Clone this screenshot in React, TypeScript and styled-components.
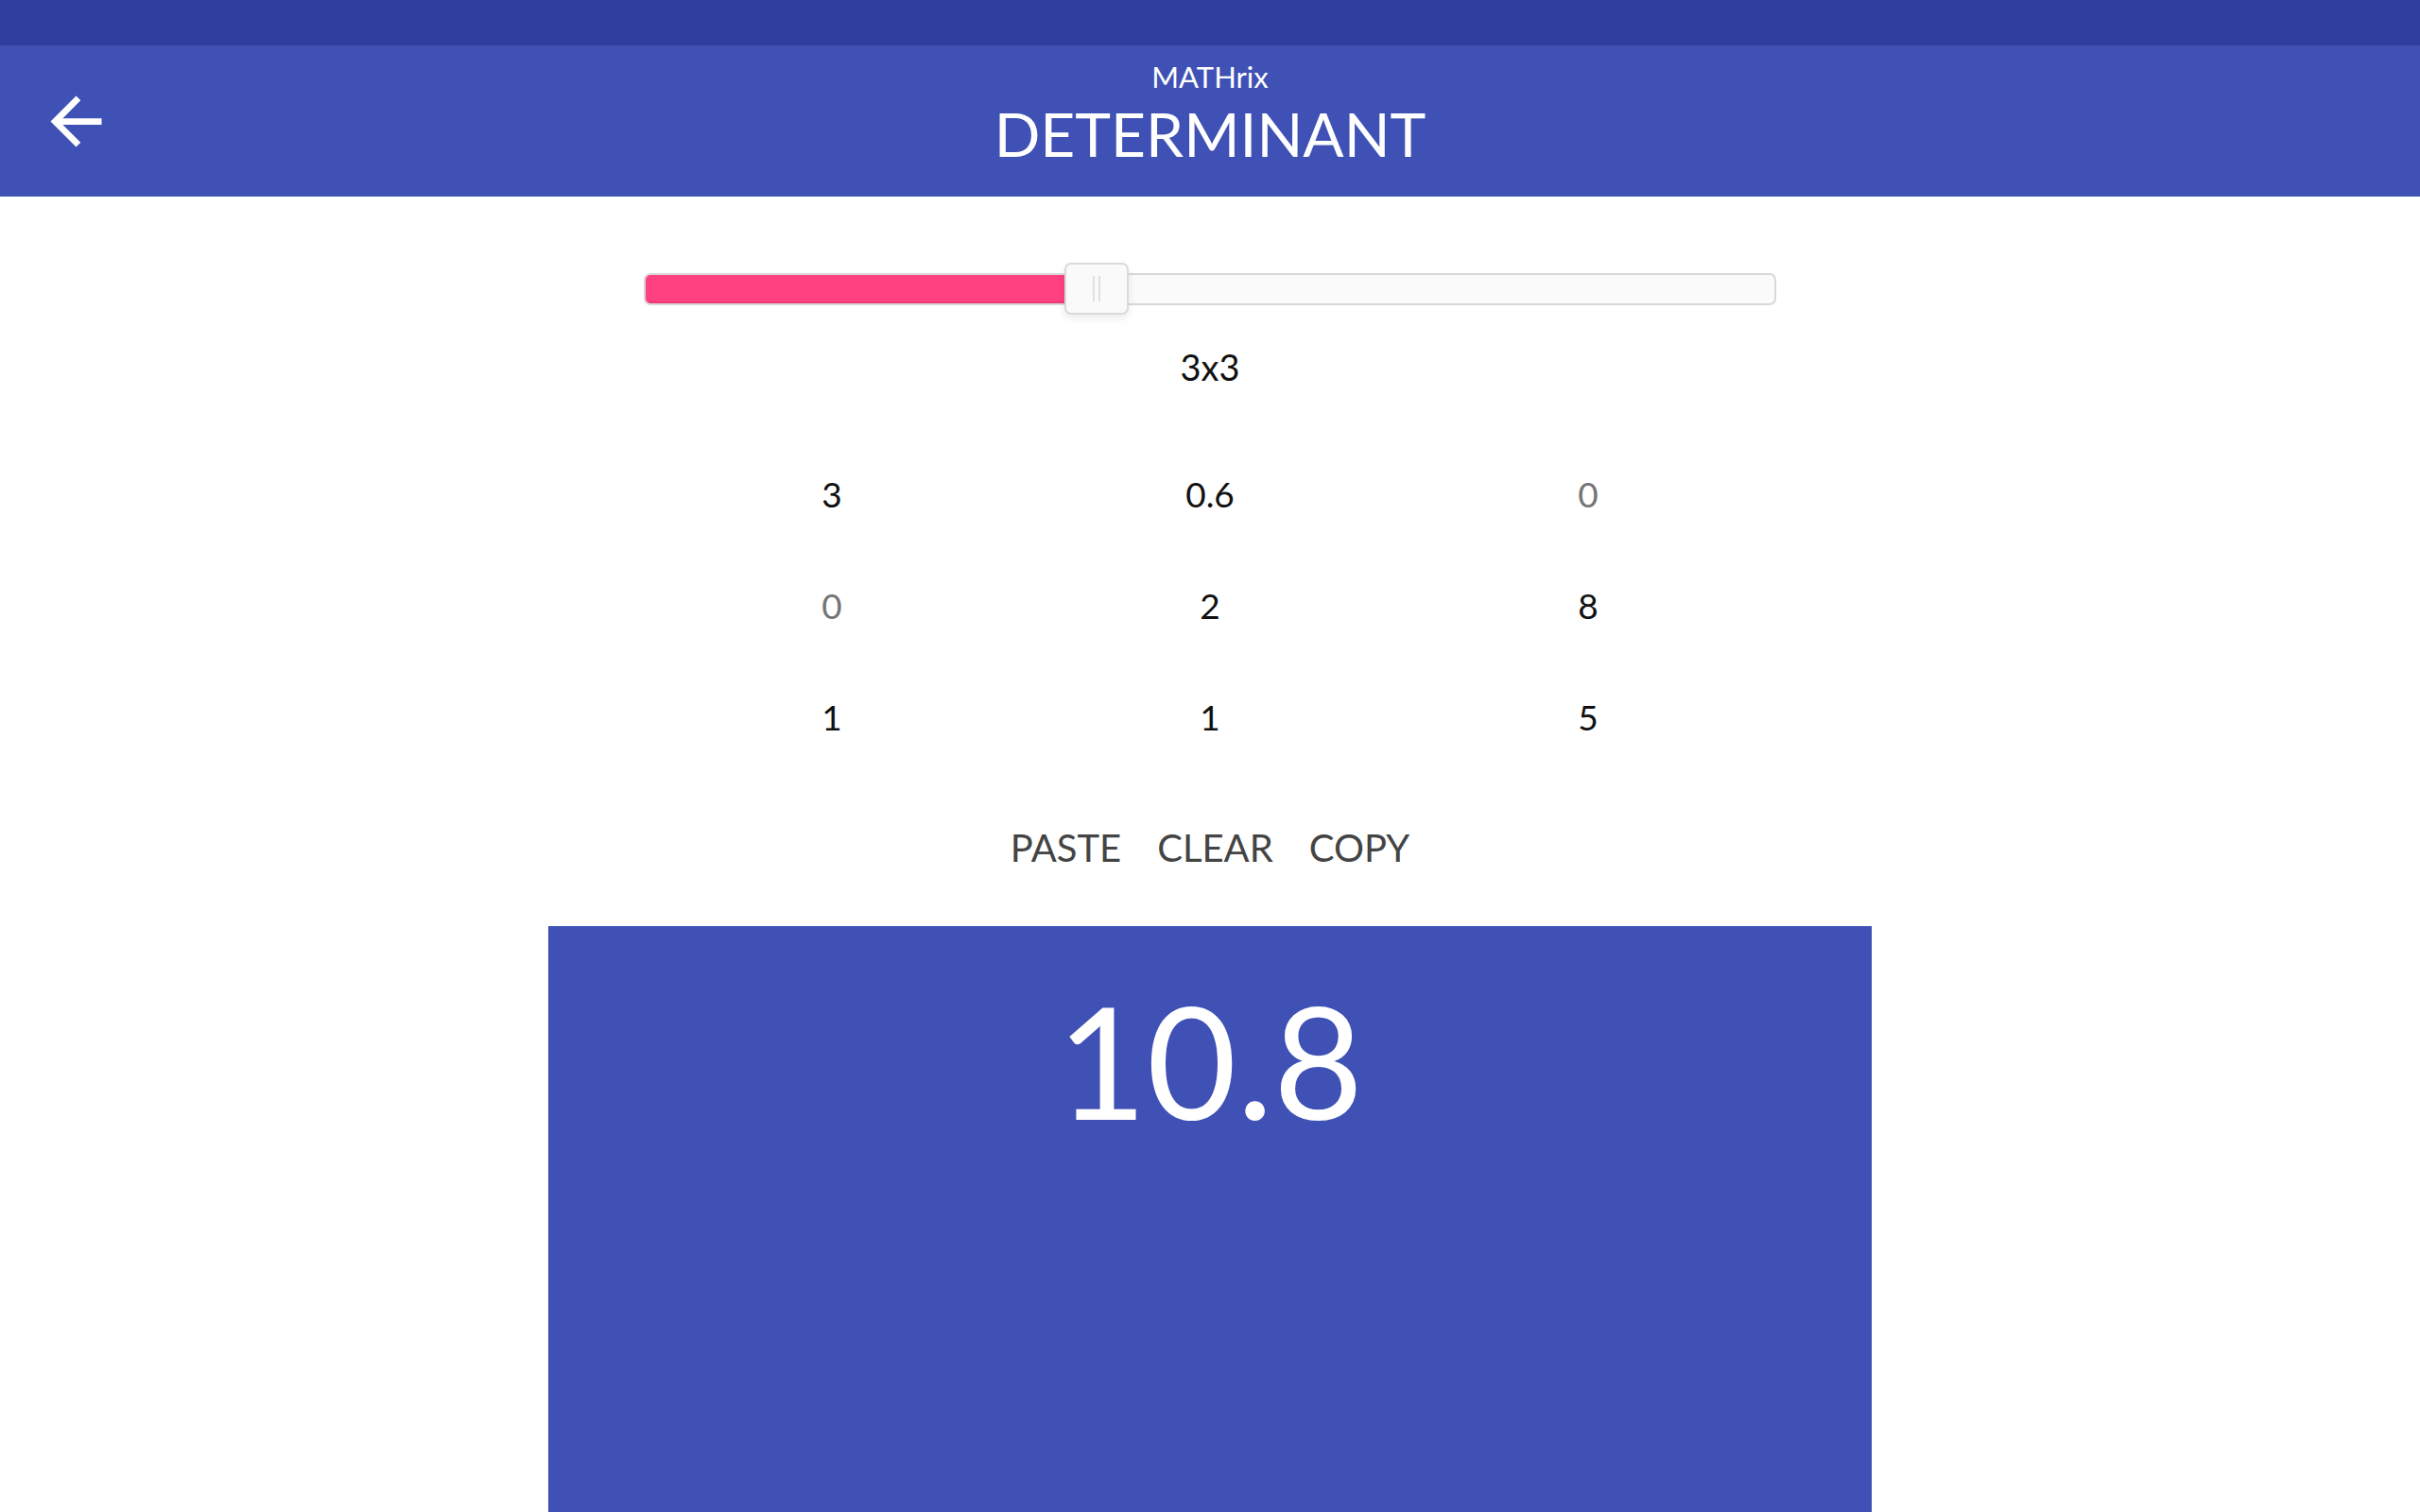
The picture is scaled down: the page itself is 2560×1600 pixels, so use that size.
import styled, { createGlobalStyle } from 'styled-components'
import { useState } from 'react'

const GlobalStyle = createGlobalStyle`
  html, body {
    margin: 0;
    padding: 0;
    background: #ffffff;
    font-family: Lato, "Open Sans", sans-serif;
  }
  * {
    box-sizing: border-box;
  }
`

const MIN_SIZE = 1
const MAX_SIZE = 6

const App = () => {
  const [size] = useState(3)
  const [cells] = useState<string[][]>([
    ['3', '0.6', ''],
    ['', '2', '8'],
    ['1', '1', '5'],
  ])

  const percent = ((size - MIN_SIZE) / (MAX_SIZE - MIN_SIZE)) * 100

  return (
    <Page>
      <GlobalStyle />
      <StatusBar />
      <AppBar>
        <BackButton aria-label='back'>
          <svg width='81' height='81' viewBox='0 0 24 24'>
            <path fill='#ffffff' d='M20 11H7.83l5.59-5.59L12 4l-8 8 8 8 1.41-1.41L7.83 13H20v-2z' />
          </svg>
        </BackButton>
        <Titles>
          <AppName>MATHrix</AppName>
          <ScreenTitle>DETERMINANT</ScreenTitle>
        </Titles>
        <span />
      </AppBar>

      <Content>
        <Slider>
          <Track>
            <Fill style={{ width: `${percent}%` }} />
          </Track>
          <Thumb style={{ left: `${percent}%` }}>
            <Grip />
            <Grip />
          </Thumb>
        </Slider>

        <SizeLabel>{size}x{size}</SizeLabel>

        <Matrix>
          {cells.map((row, r) =>
            row.map((value, c) => (
              <Cell key={`${r}-${c}`} defaultValue={value} placeholder='0' />
            ))
          )}
        </Matrix>

        <Actions>
          <TextButton>PASTE</TextButton>
          <TextButton>CLEAR</TextButton>
          <TextButton>COPY</TextButton>
        </Actions>

        <Result>
          <ResultValue>10.8</ResultValue>
        </Result>
      </Content>
    </Page>
  )
}

export default App

const Page = styled.div`
  display: flex;
  flex-direction: column;
  min-height: 100vh;
`

const StatusBar = styled.div`
  height: 48px;
  background: #303f9f;
`

const AppBar = styled.header`
  display: grid;
  grid-template-columns: 160px 1fr 160px;
  align-items: center;
  height: 160px;
  background: #3f51b5;
  color: #ffffff;
`

const BackButton = styled.button`
  display: flex;
  align-items: center;
  justify-content: center;
  height: 160px;
  padding: 0;
  border: none;
  background: transparent;
  cursor: pointer;
`

const Titles = styled.div`
  display: flex;
  flex-direction: column;
  align-items: center;
  align-self: start;
  padding-top: 18px;
`

const AppName = styled.div`
  font-size: 31px;
  line-height: 31px;
`

const ScreenTitle = styled.h1`
  margin: 13px 0 0;
  font-size: 64px;
  line-height: 64px;
  font-weight: 400;
`

const Content = styled.main`
  flex: 1;
  display: flex;
  flex-direction: column;
  align-items: center;
`

const Slider = styled.div`
  position: relative;
  display: flex;
  align-items: center;
  width: 1198px;
  height: 55px;
  margin-top: 70px;
`

const Track = styled.div`
  position: relative;
  width: 100%;
  height: 34px;
  border: 2px solid #d8d8d8;
  border-radius: 7px;
  background: #fafafa;
  overflow: hidden;
`

const Fill = styled.div`
  height: 100%;
  background: #ff4081;
  box-shadow: inset 0 -2px 0 rgba(0, 0, 0, 0.08);
`

const Thumb = styled.div`
  position: absolute;
  top: 0;
  width: 68px;
  height: 55px;
  margin-left: -34px;
  display: flex;
  justify-content: center;
  align-items: center;
  gap: 4px;
  background: #fafafa;
  border: 2px solid #dadada;
  border-radius: 7px;
  box-shadow: 0 4px 8px rgba(0, 0, 0, 0.08);
`

const Grip = styled.span`
  width: 2px;
  height: 27px;
  background: #e0e0e0;
`

const SizeLabel = styled.div`
  margin-top: 36px;
  font-size: 38px;
  line-height: 38px;
  color: #111111;
`

const Matrix = styled.div`
  display: grid;
  grid-template-columns: repeat(3, 400px);
  grid-auto-rows: 118px;
  margin-top: 56px;
`

const Cell = styled.input`
  width: 100%;
  height: 118px;
  padding: 0;
  border: none;
  outline: none;
  background: transparent;
  text-align: center;
  font-family: inherit;
  font-size: 37px;
  color: #111111;

  &::placeholder {
    color: #757575;
    opacity: 1;
  }
`

const Actions = styled.div`
  display: flex;
  gap: 38px;
  margin-top: 60px;
`

const TextButton = styled.button`
  padding: 0;
  border: none;
  background: transparent;
  font-family: inherit;
  font-size: 40px;
  line-height: 40px;
  color: #444444;
  cursor: pointer;
`

const Result = styled.section`
  flex: 1;
  width: 1400px;
  margin-top: 63px;
  display: flex;
  justify-content: center;
  align-items: flex-start;
  background: #3f51b5;
`

const ResultValue = styled.div`
  padding-top: 60px;
  font-size: 164px;
  line-height: 164px;
  color: #ffffff;
`
